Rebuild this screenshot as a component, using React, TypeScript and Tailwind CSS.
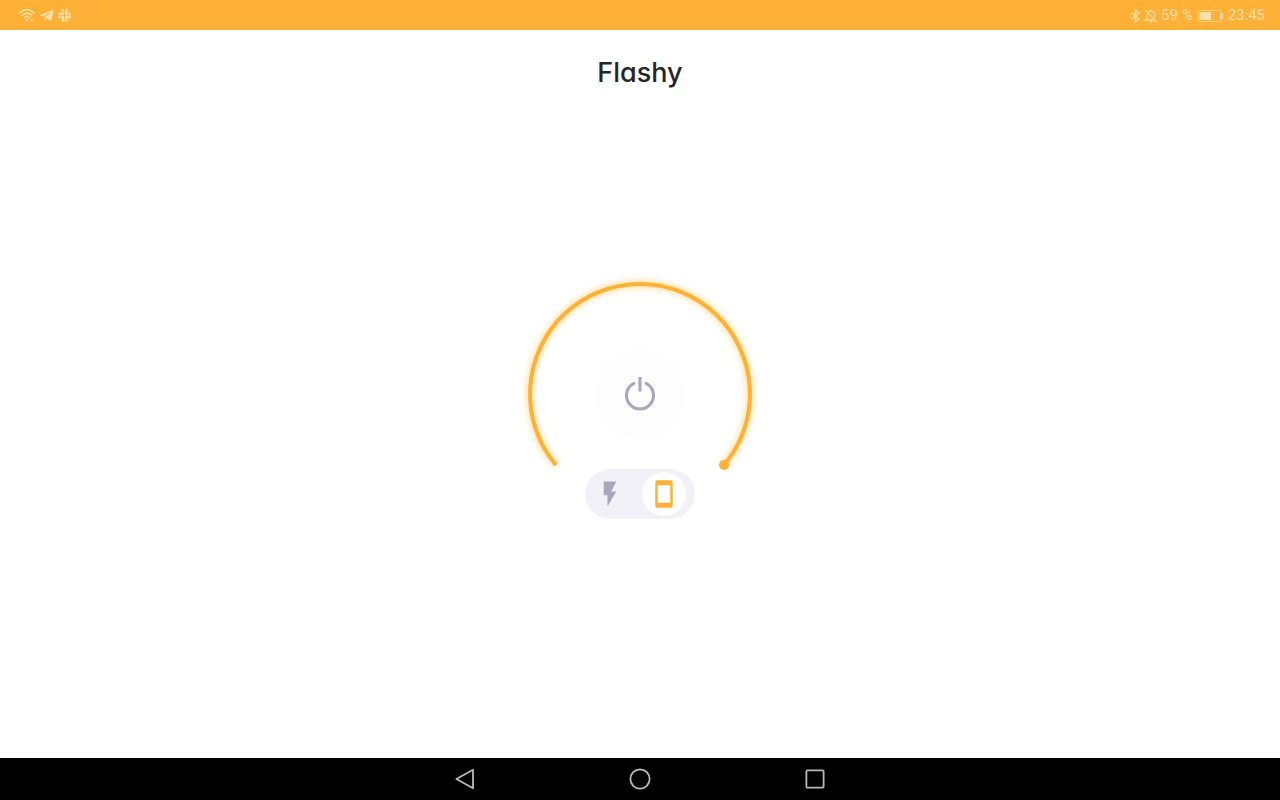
import { useState } from "react";

type Mode = "flash" | "screen";

function WifiIcon() {
  return (
    <svg width="18" height="14" viewBox="0 0 18 14" fill="none" stroke="currentColor" strokeWidth="1.5" strokeLinecap="round">
      <path d="M1.8 5C6 .6 12 .6 16.200 5" />
      <path d="M4.200 7.400c2.800-2.900 6.800-2.900 9.600 0" />
      <path d="M6.600 9.700c1.500-1.400 3.300-1.400 4.800 0" />
      <circle cx="9" cy="12" r="1.200" fill="currentColor" stroke="none" />
      <path d="M13 11.200v1.600M15 11.200v1.600" strokeWidth="1" />
    </svg>
  );
}

function TelegramIcon() {
  return (
    <svg width="14" height="12" viewBox="0 0 14 12" fill="currentColor">
      <path d="M13.800.4.400 5.700c-.5.200-.5.700 0 .9l3.200 1L11 2.600 5.100 8.200 5 11.300l1.900-1.700 3.300 2.200c.6.300 1 .1 1.200-.5z" />
    </svg>
  );
}

function SlackIcon() {
  return (
    <svg width="13" height="13" viewBox="0 0 24 24" fill="currentColor">
      <path d="M5.042 15.165a2.528 2.528 0 0 1-2.520 2.523A2.528 2.528 0 0 1 0 15.165a2.527 2.527 0 0 1 2.522-2.520h2.520zm1.271 0a2.527 2.527 0 0 1 2.521-2.520 2.527 2.527 0 0 1 2.521 2.520v6.313A2.528 2.528 0 0 1 8.834 24a2.528 2.528 0 0 1-2.521-2.522zM8.834 5.042a2.528 2.528 0 0 1-2.521-2.520A2.528 2.528 0 0 1 8.834 0a2.528 2.528 0 0 1 2.521 2.522v2.520zm0 1.271a2.528 2.528 0 0 1 2.521 2.521 2.528 2.528 0 0 1-2.521 2.521H2.522A2.528 2.528 0 0 1 0 8.834a2.528 2.528 0 0 1 2.522-2.521zM18.956 8.834a2.528 2.528 0 0 1 2.522-2.521A2.528 2.528 0 0 1 24 8.834a2.528 2.528 0 0 1-2.522 2.521h-2.522zm-1.268 0a2.528 2.528 0 0 1-2.523 2.521 2.527 2.527 0 0 1-2.520-2.521V2.522A2.527 2.527 0 0 1 15.165 0a2.528 2.528 0 0 1 2.523 2.522zM15.165 18.956a2.528 2.528 0 0 1 2.523 2.522A2.528 2.528 0 0 1 15.165 24a2.527 2.527 0 0 1-2.520-2.522v-2.522zm0-1.268a2.527 2.527 0 0 1-2.520-2.523 2.526 2.526 0 0 1 2.520-2.520h6.313A2.527 2.527 0 0 1 24 15.165a2.528 2.528 0 0 1-2.522 2.523z" />
    </svg>
  );
}

function BluetoothIcon() {
  return (
    <svg width="11" height="14" viewBox="0 0 11 14" fill="none" stroke="currentColor" strokeWidth="1.300">
      <path d="M1.200 3.600 9 10.100 5.400 13.100V.9L9 3.900 1.200 10.400" />
    </svg>
  );
}

function MutedBellIcon() {
  return (
    <svg width="14" height="14" viewBox="0 0 14 14" fill="none" stroke="currentColor" strokeWidth="1.200">
      <path d="M4.400 3.100C5.200 2.200 6 1.900 7 1.900c2.200 0 3.700 1.600 3.700 3.800v2.800M3.300 4.800v4.400L1.500 11.200h9.800M5.800 12.900h2.400M7 .6v1.300M1 .9l12 12.200" />
    </svg>
  );
}

function BatteryIcon() {
  return (
    <svg width="27" height="12" viewBox="0 0 27 12" fill="none">
      <rect x=".5" y=".5" width="23" height="11" rx="1" stroke="currentColor" strokeOpacity=".75" />
      <rect x="2" y="2" width="12" height="8" fill="currentColor" />
      <path d="M25.300 3v6" stroke="currentColor" strokeWidth="1.600" />
    </svg>
  );
}

function StatusBar() {
  return (
    <header className="flex h-[30px] items-center justify-between bg-[#ffb037] pr-[15px] pl-[18px] font-[Roboto,sans-serif] text-[15px] text-[#ffdfa8]">
      <div className="flex items-center gap-1">
        <WifiIcon />
        <TelegramIcon />
        <SlackIcon />
      </div>
      <div className="flex items-center gap-1 pt-px">
        <div className="flex items-center gap-[3px]">
          <BluetoothIcon />
          <MutedBellIcon />
          <span>59 %</span>
        </div>
        <BatteryIcon />
        <time>23:45</time>
      </div>
    </header>
  );
}

const CENTER = 125;
const RADIUS = 110;
const START = 139.800;
const SWEEP = 260.400;

function pointAt(degrees: number) {
  const angle = (degrees * Math.PI) / 180;
  return { x: CENTER + RADIUS * Math.cos(angle), y: CENTER + RADIUS * Math.sin(angle) };
}

function BrightnessArc({ value }: { value: number }) {
  const sweep = (SWEEP * value) / 100;
  const from = pointAt(START);
  const to = pointAt(START + sweep);
  const d = `M${from.x} ${from.y}A${RADIUS} ${RADIUS} 0 ${sweep > 180 ? 1 : 0} 1 ${to.x} ${to.y}`;
  return (
    <svg className="col-start-1 row-start-1 overflow-visible" width="250" height="250" viewBox="0 0 250 250" fill="none" aria-hidden="true">
      <defs>
        <filter id="glow" x="-20%" y="-20%" width="140%" height="140%">
          <feGaussianBlur stdDeviation="3" />
        </filter>
      </defs>
      <path d={d} stroke="#ffc03c" strokeOpacity=".6" strokeWidth="6" filter="url(#glow)" />
      <path d={d} stroke="#ffb037" strokeWidth="4" />
      <circle cx={to.x} cy={to.y} r="5" fill="#ffb037" />
    </svg>
  );
}

function ModeOption({ mode, label, path, selected, onSelect }: {
  mode: Mode;
  label: string;
  path: string;
  selected: boolean;
  onSelect: (mode: Mode) => void;
}) {
  return (
    <label className={selected ? "relative grid size-11 cursor-pointer place-items-center rounded-full bg-white text-[#ffb037]" : "relative grid size-11 cursor-pointer place-items-center rounded-full text-[#aaa7bd]"}>
      <input type="radio" name="mode" value={mode} aria-label={label} checked={selected} onChange={() => onSelect(mode)} className="sr-only" />
      <svg width="30" height="30" viewBox="0 0 24 24" fill="currentColor" aria-hidden="true">
        <path d={path} />
      </svg>
    </label>
  );
}

export default function App() {
  const [brightness, setBrightness] = useState(100);
  const [mode, setMode] = useState<Mode>("screen");

  return (
    <div className="flex min-h-screen flex-col bg-white">
      <StatusBar />

      <main className="grid flex-1 grid-rows-[1fr_auto_1fr] justify-items-center">
        <h1 className="pt-[25px] font-[Inter,sans-serif] text-[27px] leading-9 font-medium text-[#262626] [font-feature-settings:'cv11']">
          Flashy
        </h1>

        <section className="grid" aria-label="Torch">
          <BrightnessArc value={brightness} />
          <input
            type="range"
            min="1"
            max="100"
            value={brightness}
            onChange={(e) => setBrightness(Number(e.target.value))}
            aria-label="Brightness"
            className="col-start-1 row-start-1 h-12 w-full cursor-pointer self-start opacity-0"
          />
          <button type="button" aria-label="Power" className="col-start-1 row-start-1 grid size-[88px] cursor-pointer place-items-center place-self-center rounded-full bg-[#fdfdfd] text-[#aaa7bd]">
            <svg width="36" height="36" viewBox="0 0 36 36" fill="none" stroke="currentColor" strokeWidth="3.100" aria-hidden="true">
              <path d="M18 1v14.500" />
              <path d="M11.800 7.400a13.500 13.500 0 1 0 12.400 0" strokeLinecap="round" />
            </svg>
          </button>
          <fieldset className="col-start-1 row-start-1 flex h-[50px] items-center gap-2.5 self-end justify-self-center rounded-full bg-[#f2f1f7] pr-[9px] pl-[3px]">
            <ModeOption mode="flash" label="Flashlight" path="M7 2v11h3v9l7-12h-4l4-8z" selected={mode === "flash"} onSelect={setMode} />
            <ModeOption mode="screen" label="Screen" path="M17 19H7V5h10m0-4H7a2 2 0 0 0-2 2v18a2 2 0 0 0 2 2h10a2 2 0 0 0 2-2V3a2 2 0 0 0-2-2z" selected={mode === "screen"} onSelect={setMode} />
          </fieldset>
        </section>
      </main>

      <nav aria-label="System" className="flex h-[42px] items-center justify-center gap-[151px] bg-black text-[#b8b8b8]">
        <button type="button" aria-label="Back" className="cursor-pointer">
          <svg width="24" height="24" viewBox="0 0 24 24" fill="none" stroke="currentColor" strokeWidth="1.800" strokeLinejoin="round">
            <path d="M20 2.800v18.400L3.400 12z" />
          </svg>
        </button>
        <button type="button" aria-label="Home" className="cursor-pointer">
          <svg width="24" height="24" viewBox="0 0 24 24" fill="none" stroke="currentColor" strokeWidth="1.800">
            <circle cx="12" cy="12" r="9.600" />
          </svg>
        </button>
        <button type="button" aria-label="Recents" className="cursor-pointer">
          <svg width="24" height="24" viewBox="0 0 24 24" fill="none" stroke="currentColor" strokeWidth="1.800">
            <rect x="3.400" y="3.400" width="17.200" height="17.200" rx="1" />
          </svg>
        </button>
      </nav>
    </div>
  );
}
